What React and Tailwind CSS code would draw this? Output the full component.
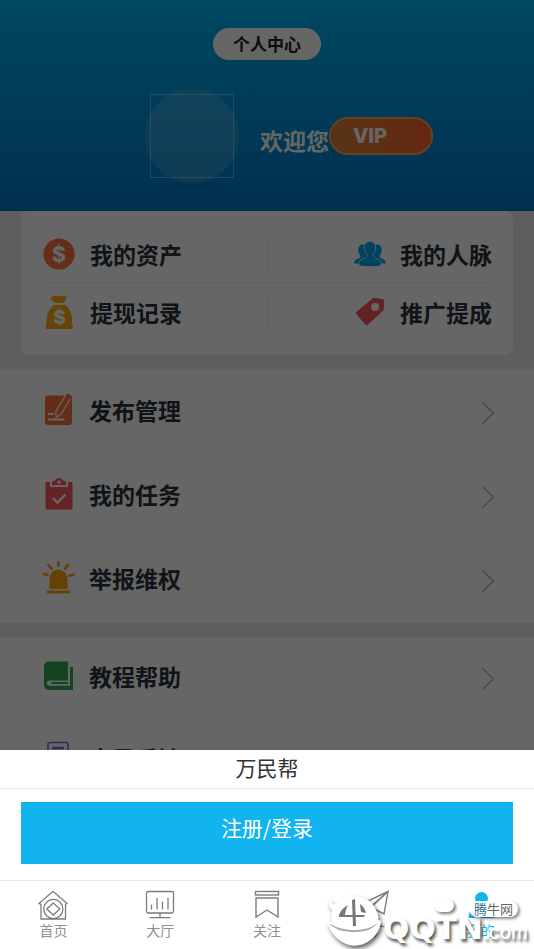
import React from "react";

const CoinIcon = () => (
  <svg width="32" height="32" viewBox="0 0 32 32">
    <circle cx="16" cy="16" r="15.600" fill="#ff7043" />
    <text x="16" y="23.500" textAnchor="middle" fontSize="21" fontWeight="800" fontFamily="Inter, sans-serif" fill="#fff">$</text>
  </svg>
);

const MoneyBagIcon = () => (
  <svg width="32" height="34" viewBox="0 0 32 34" fill="#ffa80f">
    <path d="M8 1.500c2 .3 3.200-.8 5-.8 1.400 0 2 .8 3 .8s1.800-.8 3.200-.8c1.600 0 2.500 1 4.800.8L21 8H12L8 4z" />
    <path d="M11 10h11c4.500 3.500 6.800 8 7 14 0 4 .3 6 1 8.500-.4 1-1 1.500-2 1.500H4.500c-1.400 0-2-.7-2-1.500 1-2.500 1-4.500 1.200-8.500C4 18 6.500 13.500 11 10z" />
    <text x="16.500" y="29" textAnchor="middle" fontSize="19" fontWeight="800" fontFamily="Inter, sans-serif" fill="#fff">$</text>
  </svg>
);

const PeopleIcon = () => (
  <svg width="32" height="26" viewBox="0 0 32 26" fill="#00a8f0">
    <path d="M9 3.500c-3.300 0-5 2.300-4.700 6 .2 2.500 1 4 2 5 .3 2-.6 2.600-2.500 3.300C1.500 18.700.3 19.500.3 22.500H8l8-6 8 6h7.700c0-3-1.200-3.800-3.500-4.700-1.900-.7-2.800-1.300-2.500-3.300 1-1 1.800-2.500 2-5 .3-3.700-1.400-6-4.700-6z" />
    <path d="M16 .5c-4 0-6 2.700-5.500 6.800.3 2.900 1.200 4.700 2.500 5.900.2 2.300-.6 3.200-3 4.200-3.400 1.300-5 2-5 6.600 0 1 4 1.500 11 1.500s11-.5 11-1.500c0-4.600-1.600-5.300-5-6.600-2.400-1-3.200-1.900-3-4.200 1.300-1.200 2.200-3 2.500-5.900C22 3.200 20 .5 16 .5z" stroke="#fff" strokeWidth=".8" />
  </svg>
);

const TagIcon = () => (
  <svg width="32" height="30" viewBox="0 0 32 30">
    <path
      fillRule="evenodd"
      fill="#f8595c"
      d="M18.500 1.500c.8-.5 1.500-.6 2.400-.5l8 1.300c.9.200 1.300.7 1.300 1.600l-.4 8c0 1-.4 1.700-1.100 2.400L14 27.500c-1 .9-1.900.9-2.700 0L2.200 17.200c-.7-.9-.6-1.700.3-2.500zM21 6a4 4 0 1 0 .1 8A4 4 0 0 0 21 6z"
    />
  </svg>
);

const PublishIcon = () => (
  <svg width="32" height="34" viewBox="0 0 32 34">
    <path d="M5 2.500h24V29a3 3 0 0 1-3 3H5a3 3 0 0 1-3-3V5.500a3 3 0 0 1 3-3z" fill="#fa7238" />
    <path d="M23 2c.8-1.400 2-1.600 3.500-.7 1.700 1 2.200 2 1.400 3.500L18.500 20.700l-5.300 3.600-.4-6z" fill="#fa7238" stroke="#fff" strokeWidth="1.300" />
    <path d="M5 21h5.500M5 26.500h16.500" stroke="#fff" strokeWidth="2" />
    <path d="M23.500 1.500l5.500 3.200" stroke="#fa7238" strokeWidth="3" />
  </svg>
);

const TaskIcon = () => (
  <svg width="32" height="34" viewBox="0 0 32 34">
    <path d="M3.500 5H7v5h18V5h3.500c.6 0 1 .4 1 1v25a1.500 1.500 0 0 1-1.500 1.500H4A1.500 1.500 0 0 1 2.500 31V6c0-.6.400-1 1-1z" fill="#fa5a5f" />
    <path fillRule="evenodd" d="M9 8V5.500C9 4.300 10 4 12 3.500 13 1.800 14.200 1 16 1s3 .8 4 2.500c2 .5 3 .8 3 2V8zM16 3.500a1.800 1.800 0 1 0 .1 3.600A1.800 1.800 0 0 0 16 3.500z" fill="#fa5a5f" />
    <path d="M10 21l4.500 4.500 8-8" fill="none" stroke="#fff" strokeWidth="2.300" />
  </svg>
);

const AlarmIcon = () => (
  <svg width="32" height="34" viewBox="0 0 32 34">
    <path d="M6.500 28V17.500a9 9 0 0 1 18 0V28z" fill="#ffa40f" />
    <path d="M5 31h21M15.500 1.500v3M5.500 4l3 3.500M25 4l-3 3.500M.8 13l3.700.8M30.500 13.800l-4 .8" stroke="#ffa40f" strokeWidth="2.800" strokeLinecap="round" />
  </svg>
);

const BookIcon = () => (
  <svg width="32" height="34" viewBox="0 0 32 34">
    <path
      fillRule="evenodd"
      fill="#34a853"
      d="M6 2.500h19v19H6.500c-1.800 0-2.800 1-2.800 2.500s1 2.700 2.800 2.700H27V8h3v23H6.500C3 31 1 28.800 1 26V7.500c0-3 2-5 5-5z"
    />
    <path d="M8.500 24H25" stroke="#34a853" strokeWidth="2" />
  </svg>
);

const FeedbackIcon = () => (
  <svg width="32" height="34" viewBox="0 0 32 34" fill="none" stroke="#7d66d9">
    <rect x="5" y="1.500" width="20" height="29" rx="2" strokeWidth="1.600" />
    <path d="M9 7h12M9 13h12" strokeWidth="2.500" />
  </svg>
);

const Chevron = () => (
  <svg width="14" height="24" viewBox="0 0 14 24" fill="none" stroke="#b4b4b4" strokeWidth="1.300">
    <path d="M1.500 1.500L12.500 12 1.500 22.500" />
  </svg>
);

const HomeIcon = () => (
  <svg width="30" height="30" viewBox="0 0 30 30" fill="none" stroke="#7c7c7c" strokeWidth="1.300">
    <path d="M1 13.500L15 1.300l14 12.200-1.500 1V29H3V14.500z" />
    <circle cx="15.300" cy="19" r="9.600" />
    <path d="M15.300 13l6.500 6-6.500 6-6.500-6z" />
  </svg>
);

const HallIcon = () => (
  <svg width="30" height="30" viewBox="0 0 30 30" fill="none" stroke="#7c7c7c" strokeWidth="1.300">
    <rect x="1.500" y="1.500" width="27" height="21.500" rx="1.500" />
    <path d="M6.500 14.500v5M12 8v11.500M17.500 11.500v8M23 8v11.500M15 23v4M4.500 27.700h21" />
  </svg>
);

const FollowIcon = () => (
  <svg width="30" height="30" viewBox="0 0 30 30" fill="none" stroke="#7c7c7c" strokeWidth="1.400">
    <rect x="3.500" y="1.500" width="23" height="3.500" />
    <path d="M4 8h22v19l-11-7-11 7z" />
  </svg>
);

const PlaneIcon = () => (
  <svg width="30" height="30" viewBox="0 0 30 30" fill="none" stroke="#7c7c7c" strokeWidth="1.400">
    <path d="M29 1.500L1.500 14.500l8 4zM29 1.500L12 17.500l13 6.500z" />
  </svg>
);

const MineIcon = () => (
  <svg width="30" height="30" viewBox="0 0 30 30" fill="#12b4f0">
    <circle cx="15.500" cy="8.500" r="6.500" />
    <path d="M2.500 28c0-8 5-12 13-12s13 4 13 12z" />
  </svg>
);

const assets = [
  [
    { label: "我的资产", icon: CoinIcon },
    { label: "我的人脉", icon: PeopleIcon },
  ],
  [
    { label: "提现记录", icon: MoneyBagIcon },
    { label: "推广提成", icon: TagIcon },
  ],
];

const manageMenu = [
  { label: "发布管理", icon: PublishIcon },
  { label: "我的任务", icon: TaskIcon },
  { label: "举报维权", icon: AlarmIcon },
];

const helpMenu = [
  { label: "教程帮助", icon: BookIcon },
  { label: "意见反馈", icon: FeedbackIcon },
];

const tabs = [
  { label: "首页", icon: HomeIcon },
  { label: "大厅", icon: HallIcon },
  { label: "关注", icon: FollowIcon },
  { label: "推广", icon: PlaneIcon },
  { label: "我的", icon: MineIcon, active: true },
];

const MenuRow = ({ label, icon: Icon, className }) => (
  <a href="#" className={`flex items-center justify-between border-b border-[#f6f6f6] pr-[39px] pl-[43px] ${className}`}>
    <span className="flex items-center gap-[14px] pb-[6px] text-[23px] leading-8 font-bold text-[#28323c]">
      <Icon />
      {label}
    </span>
    <Chevron />
  </a>
);

const Header = () => (
  <header className="bg-linear-to-b from-[#00b4ee] to-[#0078c6] py-7">
    <h1 className="mx-auto w-fit rounded-full bg-white px-5 text-[17px] leading-8 font-bold text-[#222]">
      个人中心
    </h1>
    <div className="mt-[29px] flex items-center justify-center pl-11">
      <div className="grid size-[94px] place-items-center rounded-full bg-white/15">
        <div className="size-[84px] border border-white/35" />
      </div>
      <span className="ml-[21px] pt-2 text-[23px] leading-8 font-bold text-white">欢迎您</span>
      <button className="w-[104px] rounded-full border-2 border-[#ffa05a] bg-linear-to-r from-[#d98038] to-[#ff6430] pr-[22px] font-['Inter'] text-[20px] leading-[34px] font-extrabold text-white">
        VIP
      </button>
    </div>
  </header>
);

const Watermark = () => (
  <div className="pointer-events-none absolute right-0 bottom-0 flex items-end pr-[6px] text-white">
    <svg className="drop-shadow-[2px_3px_2px_rgba(0,0,0,0.6)]" width="56" height="54" viewBox="0 0 56 54">
      <path
        fill="#fff"
        d="M2 3c1 4 3 6 7 6C14 3 22 0 30 1c8 1 15 5 18 12 3 5 4 9 3 12l3 1c-1 9-5 15-12 20-8 6-19 6-27 1C7 42 2 35 0 26l5 1c-1-4-1-8 0-12C2 12 1 8 2 3z"
      />
      <g fill="#777">
        <path d="M25 5l3-1 1 27h-3z" />
        <path d="M12 20c2-5 5-8 9-10-2 4-3 7-3 10h20l-1 2H12z" />
        <path d="M33 9c3 2 5 5 6 9l-5-1z" />
        <path d="M2 28c8 5 16 7 25 7s17-2 24-7c-6 7-14 9-24 9S8 35 2 28z" fill="#aaa" />
      </g>
    </svg>
    <div className="relative flex items-baseline font-['DejaVu_Sans'] text-[31px] leading-8 font-bold [text-shadow:2px_3px_3px_rgba(0,0,0,0.65)]">
      <span>QQTN</span>
      <span className="font-['Inter'] text-[19px] font-medium">.com</span>
      <span className="absolute top-[-13px] left-[51px] h-[13px] w-5 rounded-full bg-white shadow-[2px_2px_3px_rgba(0,0,0,0.5)]" />
      <span className="absolute top-[-11px] right-[10px] rounded-full bg-white px-[5px] font-['Noto_Sans_CJK_SC'] text-[13px] leading-4 font-normal whitespace-nowrap text-[#666] shadow-[2px_2px_3px_rgba(0,0,0,0.45)] [text-shadow:none]">
        <b className="font-normal text-[#28708c]">腾</b>牛网
      </span>
    </div>
  </div>
);

const App = () => {
  return (
    <div className="flex h-dvh flex-col overflow-hidden bg-white font-['Noto_Sans_CJK_SC',sans-serif]">
      <main className="relative min-h-0 grow overflow-hidden bg-[#e6ebf0]">
        <Header />

        <section className="mx-[21px] mb-[15px] rounded-lg bg-white pt-[14px] pr-[21px] pb-[15px] pl-[22px]">
          {assets.map((row, i) => (
            <div key={i} className={i === 0 ? "flex h-[59px] items-center border-b-2 border-[#f0f5f7]" : "flex h-14 items-center"}>
              {row.map(({ label, icon: Icon }, j) => (
                <a
                  key={label}
                  href="#"
                  className={
                    j === 0
                      ? "flex h-9 flex-1 items-center gap-[15px] border-r-2 border-[#f0f5f7]"
                      : "flex h-9 flex-1 items-center justify-end gap-[14px]"
                  }
                >
                  <Icon />
                  <span className="text-[23px] leading-8 font-bold text-[#28323c]">{label}</span>
                </a>
              ))}
            </div>
          ))}
        </section>

        <nav className="mb-[14px] bg-white pt-px">
          {manageMenu.map((item) => (
            <MenuRow key={item.label} {...item} className="h-[84px]" />
          ))}
        </nav>

        <nav className="bg-white">
          {helpMenu.map((item) => (
            <MenuRow key={item.label} {...item} className="h-[82px] pt-[2px]" />
          ))}
        </nav>

        <div className="absolute inset-0 bg-black/60" />
      </main>

      <section className="shrink-0 bg-white">
        <h2 className="border-b border-[#ececec] pb-1 text-center text-[21px] leading-[34px] text-[#333]">万民帮</h2>
        <div className="px-[21px] pt-[13px] pb-4">
          <button className="block w-full bg-[#12b4f0] pt-[7px] pb-[19px] text-[21px] leading-9 text-white">
            注册/登录
          </button>
        </div>
      </section>

      <footer className="relative shrink-0 border-t border-[#e8e8e8]">
        <nav className="grid grid-cols-5 py-[9px]">
          {tabs.map(({ label, icon: Icon, active }) => (
            <a
              key={label}
              href="#"
              className={`flex flex-col items-center text-[14px] leading-5 ${active ? "text-[#12b4f0]" : "text-[#909090]"}`}
            >
              <Icon />
              {label}
            </a>
          ))}
        </nav>
        <Watermark />
      </footer>
    </div>
  );
};

export default App;
